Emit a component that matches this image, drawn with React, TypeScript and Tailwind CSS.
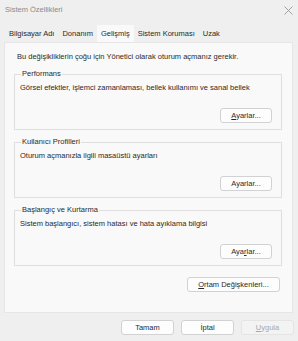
import React from 'react';

const Btn: React.FC<{ children: React.ReactNode; className?: string; disabled?: boolean }> = ({ children, className = '', disabled }) => (
  <button
    className={`h-[15px] rounded-[3px] border text-[7.5px] leading-none ${
      disabled ? 'border-[#e4e4e4] bg-[#f3f3f3] text-[#a8a8a8]' : 'border-[#d2d2d2] bg-[#fdfdfd] text-[#2a2a2a]'
    } ${className}`}
  >
    {children}
  </button>
);

const Group: React.FC<{ title: string; text: string; btn: React.ReactNode }> = ({ title, text, btn }) => (
  <fieldset className="border border-[#dedede] px-[5px] pb-[6px]">
    <legend className="ml-[1px] px-[1px] text-[7.5px] leading-[10px]">{title}</legend>
    <p className="mt-[4px] text-[7.5px] leading-[10px]">{text}</p>
    <div className="mt-[15px] flex justify-end pr-[4px]">
      <Btn className="w-[52px]">{btn}</Btn>
    </div>
  </fieldset>
);

const tabs = ['Bilgisayar Adı', 'Donanım', 'Gelişmiş', 'Sistem Koruması', 'Uzak'];

export default function App() {
  return (
    <div className="flex h-[341px] w-[298px] flex-col bg-[#efefef] text-[#2a2a2a]" style={{ fontFamily: '"Liberation Sans", Arial, sans-serif' }}>
      {/* title bar */}
      <div className="flex h-[18px] items-center justify-between pl-[5px] pr-[5px] pt-[2px]">
        <span className="text-[7.5px] text-[#8a8a8a]">Sistem Özellikleri</span>
        <svg width="9" height="9" viewBox="0 0 9 9" className="text-[#8f8f8f]">
          <path d="M0.5 0.5L8.5 8.5M8.5 0.5L0.5 8.5" stroke="currentColor" strokeWidth="0.8" />
        </svg>
      </div>

      {/* tabs */}
      <div className="mt-[7px] flex h-[17px] pl-[5px] text-[7.5px]">
        {tabs.map((t) => (
          <div key={t} className={`flex h-full items-center px-[4px] ${t === 'Gelişmiş' ? 'bg-[#f9f9f9]' : ''}`}>
            {t}
          </div>
        ))}
      </div>

      {/* panel */}
      <div className="ml-[4px] mr-[5px] flex h-[271px] flex-col border border-[#e6e6e6] bg-[#f9f9f9] pl-[9px] pr-[10px] pt-[9px]">
        <p className="pl-[3px] text-[7.5px] leading-[10px]">Bu değişikliklerin çoğu için Yönetici olarak oturum açmanız gerekir.</p>
        <div className="mt-[7px] flex flex-col gap-[7px]">
          <Group
            title="Performans"
            text="Görsel efektler, işlemci zamanlaması, bellek kullanımı ve sanal bellek"
            btn={<><span className="underline">A</span>yarlar...</>}
          />
          <Group title="Kullanıcı Profilleri" text="Oturum açmanızla ilgili masaüstü ayarları" btn="Ayarlar..." />
          <Group
            title="Başlangıç ve Kurtarma"
            text="Sistem başlangıcı, sistem hatası ve hata ayıklama bilgisi"
            btn={<>Aya<span className="underline">r</span>lar...</>}
          />
        </div>
        <div className="mt-[11px] flex justify-end pr-[2px]">
          <Btn className="w-[93px]">
            <span className="underline">O</span>rtam Değişkenleri...
          </Btn>
        </div>
      </div>

      {/* footer */}
      <div className="mt-[7px] flex justify-end gap-[7px] pr-[4px]">
        <Btn className="w-[53px]">Tamam</Btn>
        <Btn className="w-[53px]">İptal</Btn>
        <Btn className="w-[53px]" disabled>
          <span className="underline">U</span>ygula
        </Btn>
      </div>
    </div>
  );
}
